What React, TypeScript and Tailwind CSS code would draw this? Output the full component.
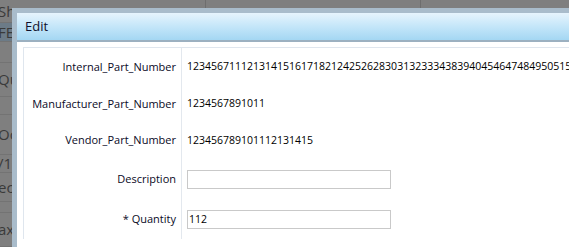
import React from "react";

const bgRows = [
  { h: 23, text: "Sh", selected: false },
  { h: 19, text: "FE", selected: true },
  { h: 21, text: "", selected: false },
  { h: 34, text: "Qu", selected: false },
  { h: 18, text: "", selected: false },
  { h: 40, text: "Oc", selected: false },
  { h: 18, text: "/1", selected: false },
  { h: 29, text: "ec", selected: false },
  { h: 11, text: "", selected: false },
  { h: 34, text: "ax", selected: false },
];

const fields = [
  { label: "Internal_Part_Number", value: "12345671112131415161718212425262830313233343839404546474849505152535455", h: "h-[38px]" },
  { label: "Manufacturer_Part_Number", value: "1234567891011", h: "h-[36px]" },
  { label: "Vendor_Part_Number", value: "123456789101112131415", h: "h-[37px]" },
];

const inputs = [
  { label: "Description", value: "" },
  { label: "* Quantity", value: "112" },
];

export default function App() {
  return (
    <div className="relative h-[247px] w-[569px] overflow-hidden bg-[#7f7f7f] font-['Open_Sans',sans-serif]">
      {/* page behind the modal, greyed out */}
      <div className="flex flex-col">
        {bgRows.map((row, i) => (
          <div
            key={i}
            style={{ height: row.h }}
            className={
              "flex items-center border-b border-[#737373] " +
              (row.selected ? "bg-[#6c7b87]" : "")
            }
          >
            <div className="flex h-full w-[206px] items-center border-r border-[#6e6e6e] text-[15px] leading-none text-[#3a3a3a]">
              <span className="-ml-[2px]">{row.text}</span>
            </div>
            <div className="h-full w-[215px] border-r border-[#6e6e6e]" />
          </div>
        ))}
      </div>

      {/* Edit dialog */}
      <div className="absolute left-[12px] top-[8px] h-[260px] w-[580px] bg-[#a9bccb] p-[5px]">
        <div className="flex h-[29px] items-center border-b-2 border-[#9cb0c0] bg-gradient-to-b from-[#e6f4fd] via-[#c4e6f9] to-[#a4d7f3] pl-[8px] text-[13px] text-[#10102a]">
          Edit
        </div>
        <div className="h-full bg-white pl-[6px] pt-[5px]">
          <div className="border-l border-t border-[#dfe6ee] text-[11px] text-[#0a0a26]">
            {fields.map((f) => (
              <div key={f.label} className={"flex " + f.h}>
                <div className="flex w-[158px] shrink-0 items-center justify-end border-r border-[#e3e8ee] pr-[5px]">
                  {f.label}
                </div>
                <div className="flex items-center whitespace-nowrap pl-[5px] text-[10.5px] text-black">
                  {f.value}
                </div>
              </div>
            ))}
            {inputs.map((f) => (
              <div key={f.label} className="flex h-[40px]">
                <div className="flex w-[158px] shrink-0 items-center justify-end border-r border-[#e3e8ee] pr-[5px]">
                  {f.label}
                </div>
                <div className="flex items-center pl-[5px]">
                  <input
                    defaultValue={f.value}
                    className="h-[19px] w-[204px] border border-[#c9c9c9] bg-white px-[1px] text-[10.5px] text-black outline-none"
                  />
                </div>
              </div>
            ))}
          </div>
        </div>
      </div>
    </div>
  );
}
